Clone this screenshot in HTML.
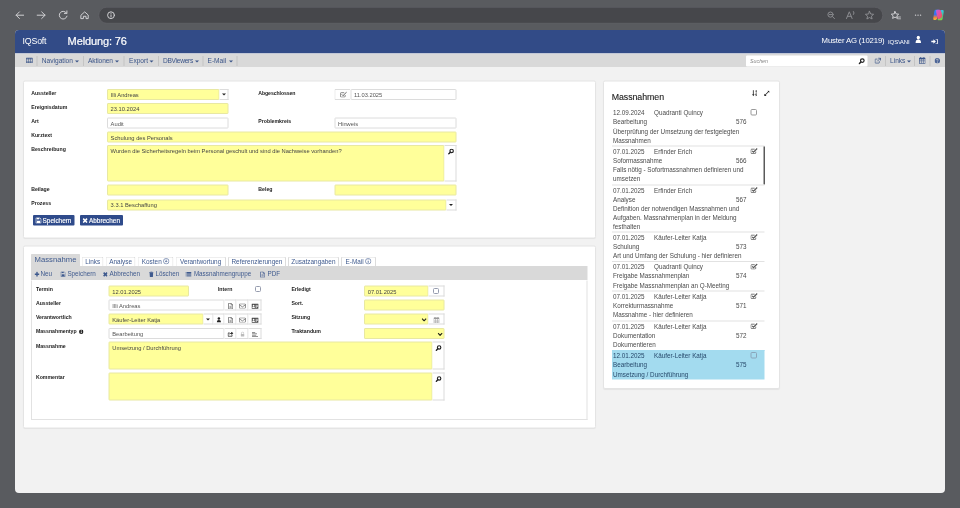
<!DOCTYPE html>
<html><head><meta charset="utf-8">
<style>
*{box-sizing:border-box;margin:0;padding:0}
html,body{width:960px;height:508px;overflow:hidden}
body{background:#595b5f;font-family:"Liberation Sans",sans-serif;position:relative;color:#333}
.a{position:absolute}
.t{position:absolute;white-space:nowrap;line-height:1}
#addr{left:98.6px;top:7.1px;width:784.4px;height:16.5px;border-radius:8.25px;background:#46474b;border:.75px solid #6a6b70}
#page{left:15px;top:30px;width:930px;height:463px;background:#f2f2f2;border-radius:4px 4px 4px 4px;overflow:hidden}
#hdr{left:0;top:0;width:930px;height:23.5px;background:#324b87;border-bottom:.75px solid #293e73}
#tb{left:0;top:23.5px;width:930px;height:13.3px;background:#d9d9d9;border-top:.5px solid #e6eaf3}
.panel{background:#fff;border:1px solid #e4e4e4;border-radius:2px;box-shadow:0 0.5px 1px rgba(0,0,0,.06)}
.lbl{font-weight:bold;font-size:5.2px;color:#222}

.f{position:absolute;height:11px;border:1px solid #dcdcdc;border-radius:1px;background:#fff;font-size:5.75px;color:#555;line-height:10.4px;padding-left:2.6px;white-space:nowrap;overflow:hidden}
.y{background:#ffff9a;border-color:#e8e8a2;color:#444}
.ad{position:absolute;height:11px;border:1px solid #dcdcdc;background:#fff;border-left:none}
.tbt{font-size:6.6px;color:#3a5488}
.sep{position:absolute;top:2px;width:1px;height:10px;background:#c4c4c4}
.car{position:absolute;width:0;height:0;border-left:2px solid transparent;border-right:2px solid transparent;border-top:2.3px solid #3a5488}
.tab{position:absolute;top:11.2px;height:10.4px;border:1px solid #dcdcdc;border-bottom:none;border-radius:1.5px 1.5px 0 0;background:#fff;font-size:6.4px;color:#3f5a8e;line-height:8.2px;text-align:center;white-space:nowrap}
.li{position:absolute;left:7.9px;width:152.8px;font-size:6.3px;color:#4a4a4a;border-top:1px solid #e2e2e2;white-space:nowrap}
.li .r{position:absolute;left:0;width:100%;height:9.1px;line-height:9.1px}
.li u{position:absolute;text-decoration:none;top:0}
.cb{position:absolute;width:6px;height:6px;border:1px solid #969cae;border-radius:1.5px;background:#fff}
#sc{position:absolute;left:0;top:0;width:1920px;height:1016px;transform:scale(.5);transform-origin:0 0;filter:contrast(1)}
#zm{position:absolute;left:0;top:0;width:960px;height:508px;zoom:2}
</style></head><body><div id="sc"><div id="zm">
<!-- browser chrome -->
<div class="a" id="addr"></div>
<svg class="a" style="left:0;top:0" width="960" height="30" viewBox="0 0 960 30" fill="none" stroke="#d0d0d3" stroke-width="1" stroke-linecap="round" stroke-linejoin="round">
<path d="M23.6 15.2H16.2M19.4 11.9L16.1 15.2L19.4 18.5"/>
<path d="M37.2 15.2H45M41.7 11.9L45.1 15.2L41.7 18.5"/>
<path d="M66.6 13.2A3.9 3.9 0 1 0 67 16.2M66.9 10.9V13.4H64.4"/>
<path d="M81.2 15L84.7 11.9L88.2 15V18.6H86V16.3H83.4V18.6H81.2Z"/>
<circle cx="111" cy="15.2" r="3.4"/><path d="M111 14.8V17M111 13.3V13.4"/>
<circle cx="830.5" cy="14.6" r="2.6" stroke="#8b8c90"/><path d="M832.5 16.6L834.5 18.6M829.3 14.6H831.7" stroke="#8b8c90"/>
<path d="M846.5 18.5L849.3 11.8L852.1 18.5M847.5 16.3H851.1M853.5 11.5Q854.8 13 853.5 14.5" stroke="#8b8c90"/>
<path d="M869.5 11.3L870.7 14L873.6 14.3L871.4 16.2L872.1 19L869.5 17.5L866.9 19L867.6 16.2L865.4 14.3L868.3 14Z" stroke="#8b8c90"/>
<path d="M895 11.5L896.1 13.9L898.7 14.2L896.8 15.9L897.4 18.4L895 17.1L892.6 18.4L893.2 15.9L891.3 14.2L893.9 13.9Z"/>
<path d="M897.5 17H900.5M897.8 18.8H900.5" stroke-width=".8"/>
<path d="M915.5 15.2H915.6M918 15.2H918.1M920.5 15.2H920.6" stroke-width="1.3"/>
</svg>
<svg class="a" style="left:932.3px;top:9px" width="12" height="12" viewBox="0 0 120 120">
<defs><linearGradient id="cpA" x1="0" y1="0" x2="0" y2="1"><stop offset="0" stop-color="#2d8ef0"/><stop offset=".45" stop-color="#3a6df0"/><stop offset=".75" stop-color="#f0843a"/><stop offset="1" stop-color="#f5c33b"/></linearGradient>
<linearGradient id="cpB" x1="0" y1="0" x2="1" y2="1"><stop offset="0" stop-color="#b45cf0"/><stop offset=".45" stop-color="#e8509c"/><stop offset="1" stop-color="#f0603a"/></linearGradient>
<linearGradient id="cpC" x1="0" y1="0" x2="0" y2="1"><stop offset="0" stop-color="#38c8e8"/><stop offset=".6" stop-color="#3cc88a"/><stop offset="1" stop-color="#8ad23c"/></linearGradient></defs>
<path d="M30 8H62Q72 8 68 20L46 96Q42 110 28 110H20Q2 110 8 90L18 24Q21 8 30 8Z" fill="url(#cpA)"/>
<path d="M90 112H58Q48 112 52 100L74 24Q78 10 92 10H100Q118 10 112 30L102 96Q99 112 90 112Z" fill="url(#cpC)"/>
<path d="M44 8H70Q82 8 86 22L98 62Q102 76 90 84L70 100Q60 108 52 96L36 30Q32 8 44 8Z" fill="url(#cpB)"/>
</svg>

<div class="a" id="page">
 <div class="a" id="hdr">
  <div class="t" style="left:7.6px;top:7.2px;font-size:8.8px;color:#fff;letter-spacing:-.2px">IQSoft</div>
  <div class="t" style="left:52.6px;top:6px;font-size:11px;color:#fff;letter-spacing:-.12px;-webkit-text-stroke:.2px #fff">Meldung: 76</div>
  <div class="t" style="left:806.6px;top:6.6px;font-size:7.75px;color:#fff;letter-spacing:-.15px">Muster AG (10219)</div>
  <div class="t" style="left:873px;top:8.5px;font-size:6.1px;color:#fff;letter-spacing:-.12px">IQS\ANI</div>
  <svg class="a" style="left:900px;top:5.6px" width="6.6" height="7.8" viewBox="0 0 7 7" preserveAspectRatio="none" fill="#fff"><circle cx="3.5" cy="1.9" r="1.7"/><path d="M0.6 6.8Q0.6 3.7 3.5 3.7Q6.4 3.7 6.4 6.8Z"/></svg>
  <svg class="a" style="left:916px;top:8.5px" width="7" height="6" viewBox="0 0 7 6" fill="#fff"><path d="M0.3 2.2H2.4V0.7L4.9 3L2.4 5.3V3.8H0.3Z"/><path d="M4.6 0.4H6.1Q6.8 0.4 6.8 1.1V4.9Q6.8 5.6 6.1 5.6H4.6V4.9H6V1.1H4.6Z"/></svg>
 </div>
 <div class="a" id="tb">
  <svg class="a" style="left:11.1px;top:3.5px" width="6.7" height="5.6" viewBox="0 0 64 54"><rect x="0" y="0" width="64" height="54" rx="6" fill="#3a5488"/><g fill="#d9d9d9"><rect x="5" y="12" width="15" height="9"/><rect x="24.5" y="12" width="15" height="9"/><rect x="44" y="12" width="15" height="9"/><rect x="5" y="25" width="15" height="9"/><rect x="24.5" y="25" width="15" height="9"/><rect x="44" y="25" width="15" height="9"/><rect x="5" y="38" width="15" height="9"/><rect x="24.5" y="38" width="15" height="9"/><rect x="44" y="38" width="15" height="9"/></g></svg>
  <div class="sep" style="left:21.3px"></div>
  <div class="t tbt" style="left:26.8px;top:3.6px">Navigation</div><div class="car" style="left:60px;top:6.4px"></div>
  <div class="sep" style="left:67.8px"></div>
  <div class="t tbt" style="left:73px;top:3.6px;letter-spacing:-.1px">Aktionen</div><div class="car" style="left:100px;top:6.4px"></div>
  <div class="sep" style="left:108.3px"></div>
  <div class="t tbt" style="left:114px;top:3.6px">Export</div><div class="car" style="left:134.5px;top:6.4px"></div>
  <div class="sep" style="left:142.8px"></div>
  <div class="t tbt" style="left:148px;top:3.6px;letter-spacing:-.28px">DBViewers</div><div class="car" style="left:180px;top:6.4px"></div>
  <div class="sep" style="left:187.3px"></div>
  <div class="t tbt" style="left:192.5px;top:3.6px">E-Mail</div><div class="car" style="left:214px;top:6.4px"></div>
  <div class="sep" style="left:221.3px"></div>
  <div class="a" style="left:731px;top:1.6px;width:121.5px;height:10.8px;background:#fff;border-radius:1px"></div>
  <div class="t" style="left:735px;top:4.2px;font-size:5.3px;font-style:italic;color:#888">Suchen</div>
  <svg class="a" style="left:843.5px;top:4px" width="6.5" height="6.5" viewBox="0 0 65 65" fill="none" stroke="#222" stroke-width="12"><circle cx="38" cy="26" r="18"/><path d="M24 40L7 57" stroke-linecap="round" stroke-width="15"/></svg>
  <svg class="a" style="left:859.3px;top:3.6px" width="6.6" height="6.2" viewBox="0 0 66 62" fill="none" stroke="#3a5488" stroke-width="7"><path d="M48 36V52Q48 56 44 56H10Q6 56 6 52V20Q6 16 10 16H30"/><path d="M36 6H60V30M60 6L28 38" stroke-width="8"/></svg>
  <div class="sep" style="left:870px"></div>
  <div class="t tbt" style="left:875px;top:3.6px">Links</div><div class="car" style="left:892px;top:6.4px"></div>
  <div class="sep" style="left:899px"></div>
  <svg class="a" style="left:903.8px;top:3.2px" width="6.6" height="6.8" viewBox="0 0 62 64"><rect x="0" y="6" width="62" height="58" rx="5" fill="#3a5488"/><rect x="12" y="0" width="8" height="14" rx="3" fill="#3a5488"/><rect x="42" y="0" width="8" height="14" rx="3" fill="#3a5488"/><g fill="#d9d9d9"><rect x="6" y="22" width="14" height="10"/><rect x="24" y="22" width="14" height="10"/><rect x="42" y="22" width="14" height="10"/><rect x="6" y="35" width="14" height="10"/><rect x="24" y="35" width="14" height="10"/><rect x="42" y="35" width="14" height="10"/><rect x="6" y="48" width="14" height="10"/><rect x="24" y="48" width="14" height="10"/><rect x="42" y="48" width="14" height="10"/></g></svg>
  <div class="sep" style="left:914.5px"></div>
  <svg class="a" style="left:919.3px;top:3.9px" width="5.6" height="5.6" viewBox="0 0 62 62"><circle cx="31" cy="31" r="30" fill="#4a6396"/><path d="M21 24Q21 14 31 14Q41 14 41 23Q41 29 34 32Q32 33.5 32 38" fill="none" stroke="#d9d9d9" stroke-width="8"/><rect x="27.5" y="43" width="9" height="8" fill="#d9d9d9"/></svg>
 </div>
 <div class="a panel" id="p1" style="left:8px;top:50.5px;width:573px;height:158px">
<div class="t lbl" style="left:7.2px;top:8.8px">Aussteller</div>
<div class="t lbl" style="left:7.2px;top:23.0px">Ereignisdatum</div>
<div class="t lbl" style="left:7.2px;top:37.2px">Art</div>
<div class="t lbl" style="left:7.2px;top:51.3px">Kurztext</div>
<div class="t lbl" style="left:7.2px;top:65.4px">Beschreibung</div>
<div class="t lbl" style="left:7.2px;top:104.8px">Beilage</div>
<div class="t lbl" style="left:7.2px;top:119.0px">Prozess</div>
<div class="t lbl" style="left:234.3px;top:8.8px" ><span style="letter-spacing:-.1px">Abgeschlossen</span></div>
<div class="t lbl" style="left:234.3px;top:37.2px">Problemkreis</div>
<div class="t lbl" style="left:234.3px;top:104.8px">Beleg</div>
<div class="f y" style="left:83px;top:7.5px;width:112.7px;">Illi Andreas</div>
<div class="ad" style="left:195.7px;top:7.5px;width:8.8px;"><div class="car" style="left:2.2px;top:3.6px;border-top-color:#222"></div></div>
<div class="f y" style="left:83px;top:21.7px;width:121.5px;">23.10.2024</div>
<div class="f " style="left:83px;top:35.9px;width:121.5px;">Audit</div>
<div class="f y" style="left:83px;top:50.1px;width:349.3px;">Schulung des Personals</div>
<div class="f y" style="left:83px;top:63.5px;width:337.6px;height:36.5px;">Wurden die Sicherheitsregeln beim Personal geschult und sind die Nachweise vorhanden?</div>
<div class="ad" style="left:420.6px;top:63.5px;width:11.7px;height:36.5px;"><svg class="a" style="left:3.3px;top:2.3px" width="6.2" height="6.2" viewBox="0 0 65 65" fill="none" stroke="#222" stroke-width="12"><circle cx="38" cy="26" r="18"/><path d="M24 40L7 57" stroke-linecap="round" stroke-width="15"/></svg></div>
<div class="f y" style="left:83px;top:103.2px;width:121.5px;"></div>
<div class="f y" style="left:83px;top:117.8px;width:339.4px;line-height:9.6px">3.3.1 Beschaffung</div>
<div class="ad" style="left:422.4px;top:117.8px;width:9.9px;"><div class="car" style="left:2.8px;top:3.6px;border-top-color:#222"></div></div>
<div class="f" style="left:310.4px;top:7.5px;width:15.9px;border-right:none;padding:0;background:#fff"><svg class="a" style="left:4.4px;top:1.6px" width="7.2" height="6" viewBox="0 0 72 60" fill="none" stroke="#555" stroke-width="7"><path d="M52 36V48Q52 56 44 56H12Q4 56 4 48V20Q4 12 12 12H42"/><path d="M17 28L30 42L67 5" stroke-width="9"/></svg></div>
<div class="f " style="left:326.3px;top:7.5px;width:106.0px;">11.03.2025</div>
<div class="f " style="left:310.4px;top:35.9px;width:121.9px;">Hinweis</div>
<div class="f y" style="left:310.4px;top:103.2px;width:121.9px;"></div>
<div class="a" style="left:9px;top:133.7px;width:41.4px;height:10.4px;background:#2f4b8b;border-radius:1px;color:#fff;font-size:6.4px;line-height:11.2px;white-space:nowrap;-webkit-text-stroke:.15px #fff"><svg class="a" style="left:2.4px;top:2.2px" width="6" height="6" viewBox="0 0 52 52"><path d="M3 3H39L49 13V49H3Z" fill="none" stroke="#fff" stroke-width="7"/><rect x="12" y="2" width="20" height="14" fill="#fff"/><rect x="12" y="28" width="28" height="20" fill="#fff"/></svg><span style="position:absolute;left:9.6px">Speichern</span></div>
<div class="a" style="left:56px;top:133.7px;width:43px;height:10.4px;background:#2f4b8b;border-radius:1px;color:#fff;font-size:6.4px;line-height:11.2px;white-space:nowrap;-webkit-text-stroke:.15px #fff"><svg class="a" style="left:2.6px;top:2.7px" width="5.2" height="5.2" viewBox="0 0 46 46"><path d="M6 6L40 40M40 6L6 40" stroke="#fff" stroke-width="14"/></svg><span style="position:absolute;left:9px">Abbrechen</span></div>
</div>
 <div class="a panel" id="p2" style="left:8px;top:215.5px;width:573px;height:183px">
<div class="tab" style="left:7px;top:6.8px;width:49px;height:14px;font-size:7.7px;line-height:9.6px;background:#d9d9d9;border-color:#d9d9d9;color:#3f5a8e">Massnahme</div>
<div class="tab" style="left:57.7px;top:9.8px;width:22.0px">Links</div>
<div class="tab" style="left:81.7px;top:9.8px;width:29.9px">Analyse</div>
<div class="tab" style="left:113.6px;top:9.8px;width:35.9px">Kosten<svg style="display:inline-block;vertical-align:-1.3px;margin-left:1.2px" width="6.4" height="6.4" viewBox="0 0 56 56" fill="none" stroke="#3f5a8e" stroke-width="5"><circle cx="28" cy="28" r="24"/><path d="M28 14V34M19 27L28 36L37 27" stroke-width="6"/></svg></div>
<div class="tab" style="left:151.4px;top:9.8px;width:50.4px">Verantwortung</div>
<div class="tab" style="left:204px;top:9.8px;width:57.8px">Referenzierungen</div>
<div class="tab" style="left:264px;top:9.8px;width:50.8px">Zusatzangaben</div>
<div class="tab" style="left:317px;top:9.8px;width:34.8px">E-Mail<svg style="display:inline-block;vertical-align:-1.3px;margin-left:1.2px" width="6.4" height="6.4" viewBox="0 0 56 56" fill="none" stroke="#3f5a8e" stroke-width="5"><circle cx="28" cy="28" r="24"/><path d="M28 24V42M28 14V18" stroke-width="7"/></svg></div>
<div class="a" style="left:7px;top:19.5px;width:556.3px;height:14.2px;background:#d9d9d9"></div>
<div class="a" style="left:7px;top:33.9px;width:556.3px;height:139.8px;border:1px solid #e2e2e2;border-top:none"></div>
<div class="t" style="left:16.51px;top:24.31px;font-size:6.3px;color:#3f5a8e">Neu</div>
<div class="t" style="left:43.38px;top:24.31px;font-size:6.3px;color:#3f5a8e">Speichern</div>
<div class="t" style="left:85.55px;top:24.31px;font-size:6.3px;color:#3f5a8e">Abbrechen</div>
<div class="t" style="left:131.44px;top:24.31px;font-size:6.3px;color:#3f5a8e">Löschen</div>
<div class="t" style="left:169.88px;top:24.31px;font-size:6.3px;color:#3f5a8e">Massnahmengruppe</div>
<div class="t" style="left:243.47px;top:24.31px;font-size:6.3px;color:#3f5a8e">PDF</div>
<svg class="a" style="left:10.31px;top:25.21px" width="5" height="5.4" viewBox="0 0 46 50"><path d="M23 3V47M1 25H45" stroke="#3f5a8e" stroke-width="13"/></svg>
<svg class="a" style="left:36.36px;top:25.21px" width="5.2" height="5.2" viewBox="0 0 52 52"><path d="M3 3H39L49 13V49H3Z" fill="none" stroke="#3f5a8e" stroke-width="6"/><rect x="12" y="3" width="20" height="13" fill="#3f5a8e"/><rect x="12" y="28" width="28" height="20" fill="#3f5a8e"/></svg>
<svg class="a" style="left:78.94px;top:25.51px" width="4.8" height="4.8" viewBox="0 0 46 46"><path d="M6 6L40 40M40 6L6 40" stroke="#3f5a8e" stroke-width="15"/></svg>
<svg class="a" style="left:124.82px;top:25.01px" width="4.8" height="5.6" viewBox="0 0 48 56"><path d="M2 10H46M16 10V3H32V10" fill="none" stroke="#3f5a8e" stroke-width="7"/><path d="M6 14H42L39 54H9Z" fill="#3f5a8e"/></svg>
<svg class="a" style="left:161.61px;top:25.41px" width="6" height="4.8" viewBox="0 0 60 48" fill="#3f5a8e"><rect x="0" y="0" width="10" height="10"/><rect x="14" y="0" width="46" height="10"/><rect x="0" y="13" width="10" height="10"/><rect x="14" y="13" width="46" height="10"/><rect x="0" y="26" width="10" height="10"/><rect x="14" y="26" width="46" height="10"/><rect x="0" y="39" width="10" height="9"/><rect x="14" y="39" width="46" height="9"/></svg>
<svg class="a" style="left:236.02px;top:24.91px" width="5.2" height="6.2" viewBox="0 0 46 56"><path d="M4 3H28L42 17V53H4Z M28 3V17H42" fill="none" stroke="#3f5a8e" stroke-width="6"/><path d="M13 30H33M13 40H33" stroke="#3f5a8e" stroke-width="5"/></svg>
<div class="t lbl" style="left:11.9px;top:40.3px">Termin</div>
<div class="t lbl" style="left:11.9px;top:54.4px">Aussteller</div>
<div class="t lbl" style="left:11.9px;top:68.4px">Verantwortlich</div>
<div class="t lbl" style="left:11.9px;top:82.7px">Massnahmentyp</div>
<div class="t lbl" style="left:11.9px;top:97.6px">Massnahme</div>
<div class="t lbl" style="left:11.9px;top:128.2px">Kommentar</div>
<svg class="a" style="left:55px;top:83px" width="4.5" height="4.5" viewBox="0 0 44 44"><circle cx="22" cy="22" r="22" fill="#222"/><rect x="18" y="18" width="8" height="17" fill="#fff"/><rect x="18" y="8" width="8" height="7" fill="#fff"/></svg>
<div class="t lbl" style="left:193.9px;top:40.3px">Intern</div>
<div class="t lbl" style="left:267.4px;top:40.3px">Erledigt</div>
<div class="t lbl" style="left:267.4px;top:54.4px">Sort.</div>
<div class="t lbl" style="left:267.4px;top:68.4px">Sitzung</div>
<div class="t lbl" style="left:267.4px;top:82.7px">Traktandum</div>
<div class="f y" style="left:84.7px;top:39.1px;width:80.2px">12.01.2025</div>
<div class="cb" style="left:231.2px;top:39.3px"></div>
<div class="f " style="left:84.7px;top:53.2px;width:115.8px;">Illi Andreas</div>
<div class="ad" style="left:200.5px;top:53.2px;width:12.0px;"><svg class="a" style="left:3.4px;top:2.2px" width="5.2" height="6.2" viewBox="0 0 46 56"><path d="M4 3H28L42 17V53H4Z M28 3V17H42" fill="none" stroke="#555" stroke-width="6"/><path d="M13 30H33M13 40H33" stroke="#555" stroke-width="5"/></svg></div>
<div class="ad" style="left:212.5px;top:53.2px;width:11.9px;"><svg class="a" style="left:2.6px;top:2.8px" width="6.8" height="5.2" viewBox="0 0 60 46" fill="none" stroke="#555" stroke-width="6"><rect x="3" y="3" width="54" height="40" rx="5"/><path d="M4 12L30 30L56 12"/></svg></div>
<div class="ad" style="left:224.4px;top:53.2px;width:13.3px;"><svg class="a" style="left:3px;top:2.7px" width="7.2" height="5.4" viewBox="0 0 66 48"><rect x="0" y="0" width="66" height="48" rx="5" fill="#4a4a4a"/><circle cx="19" cy="18" r="8" fill="#fff"/><path d="M7 40Q7 27 19 27Q31 27 31 40Z" fill="#fff"/><rect x="37" y="12" width="22" height="6" fill="#fff"/><rect x="37" y="22" width="22" height="6" fill="#fff"/><rect x="37" y="32" width="14" height="5" fill="#fff"/></svg></div>
<div class="f y" style="left:84.7px;top:67.2px;width:94.7px;">Käufer-Leiter Katja</div>
<div class="ad" style="left:179.4px;top:67.2px;width:9.9px;"><div class="car" style="left:2.8px;top:3.6px;border-top-color:#222"></div></div>
<div class="ad" style="left:189.3px;top:67.2px;width:11.2px;"><svg class="a" style="left:3.2px;top:2.4px" width="4.8" height="5.6" viewBox="0 0 46 50" fill="#222"><circle cx="23" cy="13" r="12"/><path d="M2 50Q2 27 23 27Q44 27 44 50Z"/></svg></div>
<div class="ad" style="left:200.5px;top:67.2px;width:12.0px;"><svg class="a" style="left:3.4px;top:2.2px" width="5.2" height="6.2" viewBox="0 0 46 56"><path d="M4 3H28L42 17V53H4Z M28 3V17H42" fill="none" stroke="#555" stroke-width="6"/><path d="M13 30H33M13 40H33" stroke="#555" stroke-width="5"/></svg></div>
<div class="ad" style="left:212.5px;top:67.2px;width:11.9px;"><svg class="a" style="left:2.6px;top:2.8px" width="6.8" height="5.2" viewBox="0 0 60 46" fill="none" stroke="#555" stroke-width="6"><rect x="3" y="3" width="54" height="40" rx="5"/><path d="M4 12L30 30L56 12"/></svg></div>
<div class="ad" style="left:224.4px;top:67.2px;width:13.3px;"><svg class="a" style="left:3px;top:2.7px" width="7.2" height="5.4" viewBox="0 0 66 48"><rect x="0" y="0" width="66" height="48" rx="5" fill="#4a4a4a"/><circle cx="19" cy="18" r="8" fill="#fff"/><path d="M7 40Q7 27 19 27Q31 27 31 40Z" fill="#fff"/><rect x="37" y="12" width="22" height="6" fill="#fff"/><rect x="37" y="22" width="22" height="6" fill="#fff"/><rect x="37" y="32" width="14" height="5" fill="#fff"/></svg></div>
<div class="f " style="left:84.7px;top:81.6px;width:115.8px;">Bearbeitung</div>
<div class="ad" style="left:200.5px;top:81.6px;width:12.0px;"><svg class="a" style="left:2.9px;top:2.6px" width="6.2" height="5.4" viewBox="0 0 60 52"><path d="M44 30V46H6V14H22" fill="none" stroke="#222" stroke-width="7"/><path d="M36 2L58 17L36 32V22Q22 22 16 34Q16 12 36 11Z" fill="#222"/></svg></div>
<div class="ad" style="left:212.5px;top:81.6px;width:11.9px;"><svg class="a" style="left:3.8px;top:2.6px" width="4.2" height="5.2" viewBox="0 0 44 52"><path d="M10 24V15Q10 4 22 4Q34 4 34 15V24" fill="none" stroke="#bbb" stroke-width="7"/><rect x="2" y="24" width="40" height="26" rx="4" fill="#bbb"/></svg></div>
<div class="ad" style="left:224.4px;top:81.6px;width:13.3px;"><svg class="a" style="left:3.6px;top:2.8px" width="6" height="5" viewBox="0 0 60 50" fill="#777"><rect x="0" y="0" width="32" height="8"/><rect x="0" y="14" width="50" height="8"/><rect x="0" y="28" width="42" height="8"/><rect x="0" y="42" width="60" height="8"/></svg></div>
<div class="f y" style="left:84.7px;top:95.1px;width:323.6px;height:28.1px;">Umsetzung / Durchführung</div>
<div class="ad" style="left:408.3px;top:95.1px;width:12.4px;height:28.1px;"><svg class="a" style="left:3.4px;top:2.3px" width="6.2" height="6.2" viewBox="0 0 65 65" fill="none" stroke="#222" stroke-width="12"><circle cx="38" cy="26" r="18"/><path d="M24 40L7 57" stroke-linecap="round" stroke-width="15"/></svg></div>
<div class="f y" style="left:84.7px;top:126.1px;width:323.6px;height:27.7px;"></div>
<div class="ad" style="left:408.3px;top:126.1px;width:12.4px;height:27.7px;"><svg class="a" style="left:3.4px;top:2.3px" width="6.2" height="6.2" viewBox="0 0 65 65" fill="none" stroke="#222" stroke-width="12"><circle cx="38" cy="26" r="18"/><path d="M24 40L7 57" stroke-linecap="round" stroke-width="15"/></svg></div>
<div class="f y" style="left:340.1px;top:39.1px;width:64.5px">07.01.2025</div>
<div class="ad" style="left:404.6px;top:39.1px;width:16.1px;"><div class="cb" style="left:4.4px;top:1.6px"></div></div>
<div class="f y" style="left:340.1px;top:53.2px;width:80.6px;"></div>
<div class="f y" style="left:340.1px;top:67.2px;width:64.5px;"><svg class="a" style="right:.8px;top:3.2px" width="5.2" height="3.7" viewBox="0 0 54 36" fill="none" stroke="#2a2a20" stroke-width="13"><path d="M6 6L27 28L48 6"/></svg></div>
<div class="ad" style="left:404.6px;top:67.2px;width:16.1px;"><svg class="a" style="left:5px;top:2.1px" width="6" height="6.2" viewBox="0 0 62 64"><rect x="0" y="6" width="62" height="58" rx="5" fill="#999"/><rect x="12" y="0" width="8" height="14" rx="3" fill="#999"/><rect x="42" y="0" width="8" height="14" rx="3" fill="#999"/><g fill="#fff"><rect x="6" y="22" width="14" height="10"/><rect x="24" y="22" width="14" height="10"/><rect x="42" y="22" width="14" height="10"/><rect x="6" y="35" width="14" height="10"/><rect x="24" y="35" width="14" height="10"/><rect x="42" y="35" width="14" height="10"/><rect x="6" y="48" width="14" height="10"/><rect x="24" y="48" width="14" height="10"/><rect x="42" y="48" width="14" height="10"/></g></svg></div>
<div class="f y" style="left:340.1px;top:81.6px;width:80.6px;"><svg class="a" style="right:.8px;top:3.2px" width="5.2" height="3.7" viewBox="0 0 54 36" fill="none" stroke="#2a2a20" stroke-width="13"><path d="M6 6L27 28L48 6"/></svg></div>
</div>
 <div class="a panel" id="p3" style="left:588px;top:50.5px;width:177px;height:308.3px">
<div class="t" style="left:7.7px;top:11.6px;font-size:8.8px;color:#222;letter-spacing:-.05px;-webkit-text-stroke:.12px #222">Massnahmen</div>
<svg class="a" style="left:148.1px;top:8.4px" width="5.8" height="6.4" viewBox="0 0 58 64" fill="#222"><rect x="9" y="2" width="8" height="46"/><path d="M1 42H25L13 62Z"/><rect x="38" y="4" width="8" height="22"/><path d="M32 12L44 2V12Z"/><path d="M42 35A8.5 8.5 0 1 1 41.9 35ZM42 41A3 3 0 1 0 42.1 41Z M45 44H51Q52 60 36 62V56Q46 55 45 44Z" fill-rule="evenodd"/></svg>
<svg class="a" style="left:159.9px;top:9.1px" width="5.8" height="5.6" viewBox="0 0 60 60" fill="#222"><path d="M34 2H58V26L49 17L17 49L26 58H2V34L11 43L43 11Z"/></svg>
<div class="li" style="top:25.5px;height:38.6px;border-top-color:transparent;"><div class="r" style="top:0.55px"><u style="left:1.1px">12.09.2024</u><u style="left:42.1px">Quadranti Quincy</u></div><div class="r" style="top:9.65px"><u style="left:1.1px">Bearbeitung</u><u style="right:18.2px">576</u></div><div class="r" style="top:18.75px"><u style="left:1.1px">Überprüfung der Umsetzung der festgelegten</u></div><div class="r" style="top:27.85px"><u style="left:1.1px">Massnahmen</u></div><div class="cb" style="left:138.8px;top:1.1px;width:6.4px;height:6.4px;border-color:var(--cb,#999);border-radius:1.5px;background:transparent"></div></div>
<div class="li" style="top:64.1px;height:38.7px;"><div class="r" style="top:0.55px"><u style="left:1.1px">07.01.2025</u><u style="left:42.1px">Erfinder Erich</u></div><div class="r" style="top:9.65px"><u style="left:1.1px">Soformassnahme</u><u style="right:18.2px">566</u></div><div class="r" style="top:18.75px"><u style="left:1.1px">Falls nötig - Sofortmassnahmen definieren und</u></div><div class="r" style="top:27.85px"><u style="left:1.1px">umsetzen</u></div><div class="a" style="right:-.4px;top:0;width:1.4px;height:100%;background:#5a5a5a"></div><svg class="a" style="left:138.7px;top:1.5px" width="7.2" height="6" viewBox="0 0 72 60" fill="none" stroke="#555" stroke-width="8"><path d="M52 36V48Q52 56 44 56H12Q4 56 4 48V20Q4 12 12 12H42"/><path d="M17 28L30 42L67 5" stroke-width="11"/></svg></div>
<div class="li" style="top:102.8px;height:47.3px;"><div class="r" style="top:0.55px"><u style="left:1.1px">07.01.2025</u><u style="left:42.1px">Erfinder Erich</u></div><div class="r" style="top:9.65px"><u style="left:1.1px">Analyse</u><u style="right:18.2px">567</u></div><div class="r" style="top:18.75px"><u style="left:1.1px">Definition der notwendigen Massnahmen und</u></div><div class="r" style="top:27.85px"><u style="left:1.1px">Aufgaben. Massnahmenplan in der Meldung</u></div><div class="r" style="top:36.95px"><u style="left:1.1px">festhalten</u></div><svg class="a" style="left:138.7px;top:1.5px" width="7.2" height="6" viewBox="0 0 72 60" fill="none" stroke="#555" stroke-width="8"><path d="M52 36V48Q52 56 44 56H12Q4 56 4 48V20Q4 12 12 12H42"/><path d="M17 28L30 42L67 5" stroke-width="11"/></svg></div>
<div class="li" style="top:150.1px;height:29.5px;"><div class="r" style="top:0.55px"><u style="left:1.1px">07.01.2025</u><u style="left:42.1px">Käufer-Leiter Katja</u></div><div class="r" style="top:9.65px"><u style="left:1.1px">Schulung</u><u style="right:18.2px">573</u></div><div class="r" style="top:18.75px"><u style="left:1.1px">Art und Umfang der Schulung - hier definieren</u></div><svg class="a" style="left:138.7px;top:1.5px" width="7.2" height="6" viewBox="0 0 72 60" fill="none" stroke="#555" stroke-width="8"><path d="M52 36V48Q52 56 44 56H12Q4 56 4 48V20Q4 12 12 12H42"/><path d="M17 28L30 42L67 5" stroke-width="11"/></svg></div>
<div class="li" style="top:179.6px;height:29.6px;"><div class="r" style="top:0.55px"><u style="left:1.1px">07.01.2025</u><u style="left:42.1px">Quadranti Quincy</u></div><div class="r" style="top:9.65px"><u style="left:1.1px">Freigabe Massnahmenplan</u><u style="right:18.2px">574</u></div><div class="r" style="top:18.75px"><u style="left:1.1px">Freigabe Massnahmenplan an Q-Meeting</u></div><svg class="a" style="left:138.7px;top:1.5px" width="7.2" height="6" viewBox="0 0 72 60" fill="none" stroke="#555" stroke-width="8"><path d="M52 36V48Q52 56 44 56H12Q4 56 4 48V20Q4 12 12 12H42"/><path d="M17 28L30 42L67 5" stroke-width="11"/></svg></div>
<div class="li" style="top:209.2px;height:29.6px;"><div class="r" style="top:0.55px"><u style="left:1.1px">07.01.2025</u><u style="left:42.1px">Käufer-Leiter Katja</u></div><div class="r" style="top:9.65px"><u style="left:1.1px">Korrekturmassnahme</u><u style="right:18.2px">571</u></div><div class="r" style="top:18.75px"><u style="left:1.1px">Massnahme - hier definieren</u></div><svg class="a" style="left:138.7px;top:1.5px" width="7.2" height="6" viewBox="0 0 72 60" fill="none" stroke="#555" stroke-width="8"><path d="M52 36V48Q52 56 44 56H12Q4 56 4 48V20Q4 12 12 12H42"/><path d="M17 28L30 42L67 5" stroke-width="11"/></svg></div>
<div class="li" style="top:238.8px;height:29.7px;"><div class="r" style="top:0.55px"><u style="left:1.1px">07.01.2025</u><u style="left:42.1px">Käufer-Leiter Katja</u></div><div class="r" style="top:9.65px"><u style="left:1.1px">Dokumentation</u><u style="right:18.2px">572</u></div><div class="r" style="top:18.75px"><u style="left:1.1px">Dokumentieren</u></div><svg class="a" style="left:138.7px;top:1.5px" width="7.2" height="6" viewBox="0 0 72 60" fill="none" stroke="#555" stroke-width="8"><path d="M52 36V48Q52 56 44 56H12Q4 56 4 48V20Q4 12 12 12H42"/><path d="M17 28L30 42L67 5" stroke-width="11"/></svg></div>
<div class="li" style="top:268.5px;height:29.7px;background:#a3dbef;color:#27496b;border-top-color:#a3dbef;--cb:#8aa6bb;"><div class="r" style="top:0.55px"><u style="left:1.1px">12.01.2025</u><u style="left:42.1px">Käufer-Leiter Katja</u></div><div class="r" style="top:9.65px"><u style="left:1.1px">Bearbeitung</u><u style="right:18.2px">575</u></div><div class="r" style="top:18.75px"><u style="left:1.1px">Umsetzung / Durchführung</u></div><div class="cb" style="left:138.8px;top:1.1px;width:6.4px;height:6.4px;border-color:var(--cb,#999);border-radius:1.5px;background:transparent"></div></div>
</div>
</div>
</div></div></body></html>
